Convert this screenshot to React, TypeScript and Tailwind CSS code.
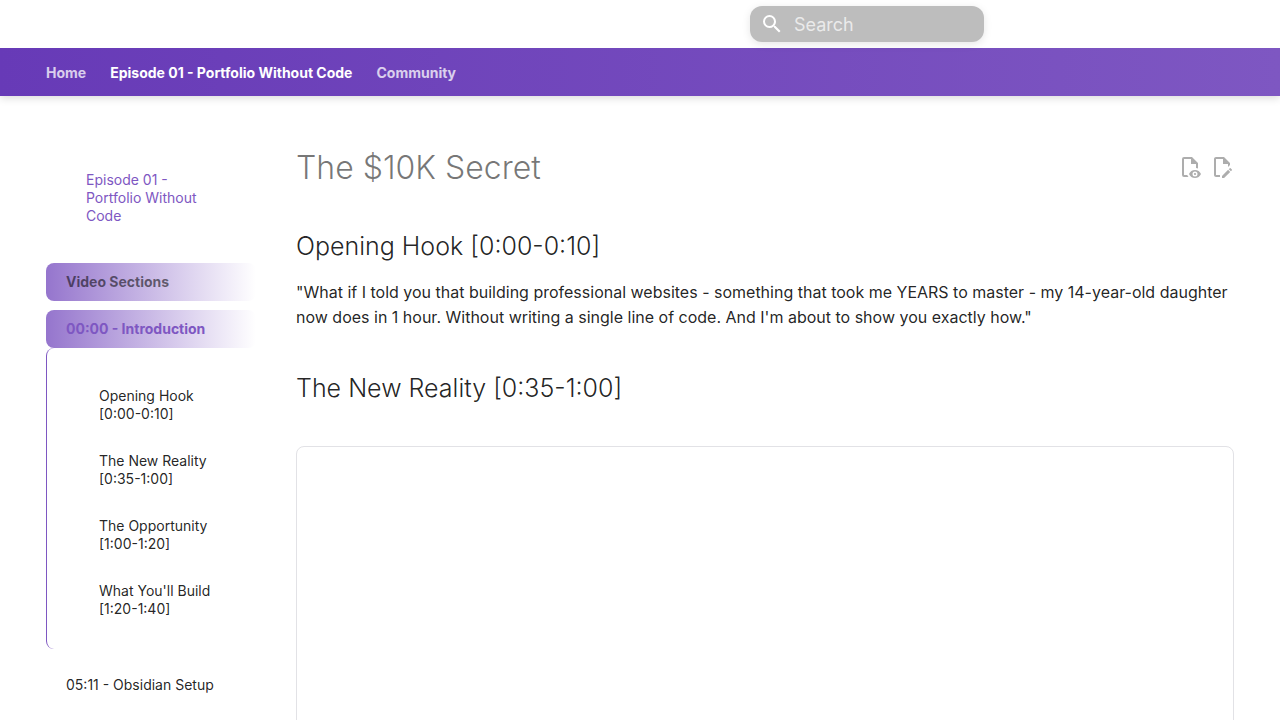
import React from "react";

const searchPath =
  "M9.5 3A6.5 6.5 0 0 1 16 9.5c0 1.61-.59 3.09-1.56 4.23l.27.27h.79l5 5-1.5 1.5-5-5v-.79l-.27-.27A6.516 6.516 0 0 1 9.5 16 6.5 6.5 0 0 1 3 9.5 6.5 6.5 0 0 1 9.5 3m0 2C7 5 5 7 5 9.5S7 14 9.5 14 14 12 14 9.5 12 5 9.5 5Z";
const viewPath =
  "M17 18c.56 0 1 .44 1 1s-.44 1-1 1-1-.44-1-1 .44-1 1-1m0-3c-2.73 0-5.06 1.66-6 4 .94 2.34 3.27 4 6 4s5.06-1.66 6-4c-.94-2.34-3.27-4-6-4m0 6.5a2.5 2.5 0 0 1-2.5-2.5 2.5 2.5 0 0 1 2.5-2.5 2.5 2.5 0 0 1 2.5 2.5 2.5 2.5 0 0 1-2.5 2.5M9.27 20H6V4h7v5h5v4.07c.7.08 1.36.25 2 .49V8l-6-6H6a2 2 0 0 0-2 2v16a2 2 0 0 0 2 2h4.5a8.15 8.15 0 0 1-1.23-2Z";
const editPath =
  "M10 20H6V4h7v5h5v3.1l2-2V8l-6-6H6c-1.1 0-2 .9-2 2v16c0 1.1.9 2 2 2h4v-2m10.2-7c.1 0 .3.1.4.2l1.3 1.3c.2.2.2.6 0 .8l-1 1-2.1-2.1 1-1c.1-.1.2-.2.4-.2m0 3.9L14.1 23H12v-2.1l6.1-6.1 2.1 2.1Z";

function Icon({ path }: { path: string }) {
  return (
    <svg viewBox="0 0 24 24" className="size-6 shrink-0 fill-current" aria-hidden="true">
      <path d={path} />
    </svg>
  );
}

const tabs = [
  { label: "Home", active: false },
  { label: "Episode 01 - Portfolio Without Code", active: true },
  { label: "Community", active: false },
];

const sections = [
  { title: "Opening Hook", time: "[0:00-0:10]" },
  { title: "The New Reality", time: "[0:35-1:00]" },
  { title: "The Opportunity", time: "[1:00-1:20]" },
  { title: "What You'll Build", time: "[1:20-1:40]" },
];

function Header() {
  return (
    <header className="shadow-[0_2px_8px_rgba(0,0,0,0.15)]">
      <div className="flex h-12 items-center justify-end bg-white pr-[296px]">
        <label className="flex h-9 w-[234px] items-center gap-[10px] rounded-xl bg-[#bdbdbd] px-[10px] text-white shadow-[0_2px_8px_rgba(0,0,0,0.1)]">
          <Icon path={searchPath} />
          <input
            type="text"
            aria-label="Search"
            placeholder="Search"
            className="min-w-0 flex-1 bg-transparent pt-0.5 text-lg outline-none placeholder:text-white/70"
          />
        </label>
      </div>
      <nav
        aria-label="Tabs"
        className="flex h-12 items-center gap-6 bg-[linear-gradient(90deg,#673ab7,#7e57c2)] px-[46px] pt-0.5 text-sm font-bold text-white"
      >
        {tabs.map((t) => (
          <a key={t.label} href="#" className={t.active ? "" : "opacity-75"}>
            {t.label}
          </a>
        ))}
      </nav>
    </header>
  );
}

function Sidebar() {
  return (
    <nav aria-label="Episode" className="w-[210px] shrink-0 pt-[75px] text-sm leading-[18px]">
      <a href="#" className="block pr-12 pl-10 text-[#7e57c2]">
        Episode 01 - Portfolio Without Code
      </a>
      <p className="mt-[38px] rounded-lg bg-[linear-gradient(90deg,#9575cd,#ffffff)] px-5 py-[10px] font-bold text-black/54">
        Video Sections
      </p>
      <a
        href="#"
        className="mt-[9px] block rounded-lg bg-[linear-gradient(90deg,#9575cd,#ffffff)] px-5 py-[10px] font-bold text-[#7e57c2]"
      >
        00:00 - Introduction
      </a>
      <ul className="flex flex-col gap-[29px] rounded-lg border-l border-[#7e57c2] pt-[39px] pb-[31px] pl-[52px] text-black/87">
        {sections.map((s) => (
          <li key={s.title}>
            <a href="#" className="block">
              {s.title}
              <br />
              {s.time}
            </a>
          </li>
        ))}
      </ul>
      <a href="#" className="mt-[27px] block px-5 text-black/87">
        05:11 - Obsidian Setup
      </a>
    </nav>
  );
}

function Article() {
  return (
    <main className="min-w-0 flex-1 pt-[51px] text-black/87">
      <div className="flex items-start justify-between">
        <h1 className="text-[32px] leading-[41px] font-light text-black/54">The $10K Secret</h1>
        <div className="flex gap-2 pt-2 text-black/32">
          <a href="#" aria-label="View source of this page">
            <Icon path={viewPath} />
          </a>
          <a href="#" aria-label="Edit this page">
            <Icon path={editPath} />
          </a>
        </div>
      </div>
      <h2 className="mt-[41px] text-[25px] leading-[35px] font-light">Opening Hook [0:00-0:10]</h2>
      <p className="mt-4 text-base leading-[25px]">
        "What if I told you that building professional websites - something that took me YEARS to
        master - my 14-year-old daughter now does in 1 hour. Without writing a single line of code.
        And I'm about to show you exactly how."
      </p>
      <h2 className="mt-[41px] text-[25px] leading-[35px] font-light">The New Reality [0:35-1:00]</h2>
      <div className="mt-10 aspect-video rounded-lg border border-[#e2e2e6]" />
    </main>
  );
}

export default function App() {
  return (
    <div className="min-h-screen bg-white font-['Inter',sans-serif]">
      <Header />
      <div className="flex gap-10 px-[46px]">
        <Sidebar />
        <Article />
      </div>
    </div>
  );
}
